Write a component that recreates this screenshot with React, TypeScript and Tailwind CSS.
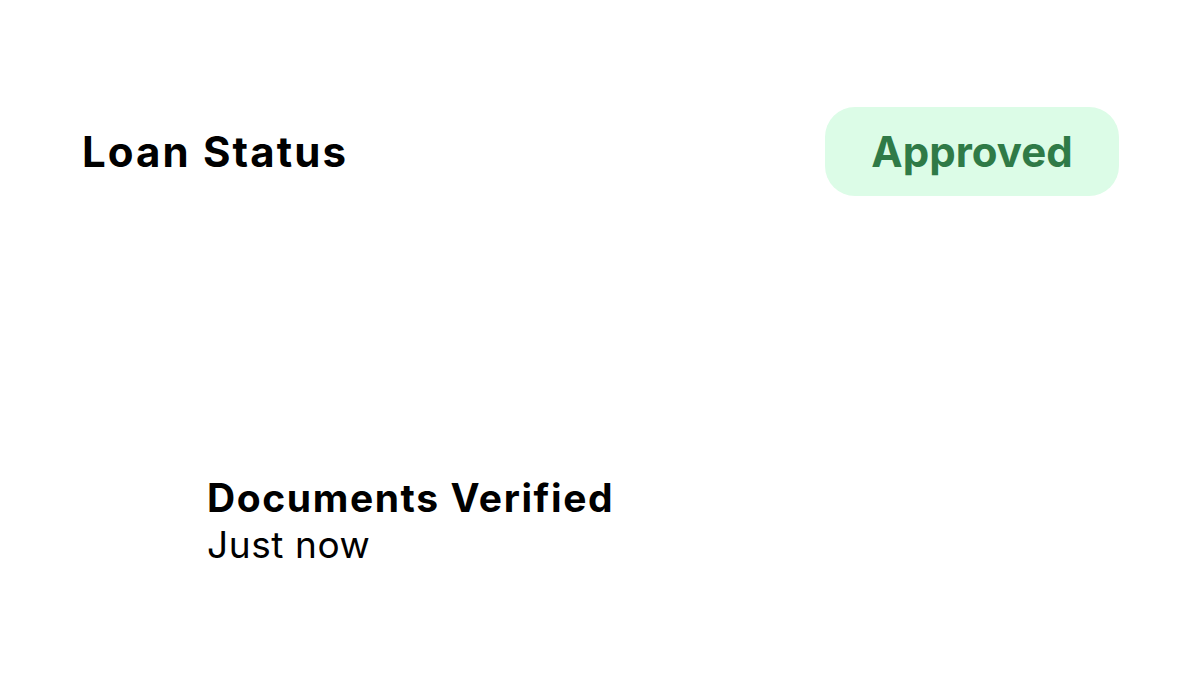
export default function App() {
  return (
    <div
      className="w-[1200px] h-[675px] bg-white flex flex-col px-[81px] pt-[107px]"
      style={{ fontFamily: "Inter, 'Noto Sans', sans-serif" }}
    >
      <div className="flex items-center justify-between">
        <h1 className="text-[42px] leading-none font-bold text-black tracking-[2.1px] pl-[1px]">
          Loan Status
        </h1>
        <div className="w-[294px] h-[89px] rounded-[30px] bg-[#dcfce7] flex items-center justify-center">
          <span className="text-[42px] leading-none font-bold text-[#2f7a47] tracking-[0px]">Approved</span>
        </div>
      </div>
      <div className="mt-[282px] pl-[126px] flex flex-col">
        <div className="text-[39px] leading-none font-bold text-black tracking-[1.6px]">Documents Verified</div>
        <div className="mt-[9px] text-[37px] leading-none font-normal text-black tracking-[0.6px]">Just now</div>
      </div>
    </div>
  );
}
